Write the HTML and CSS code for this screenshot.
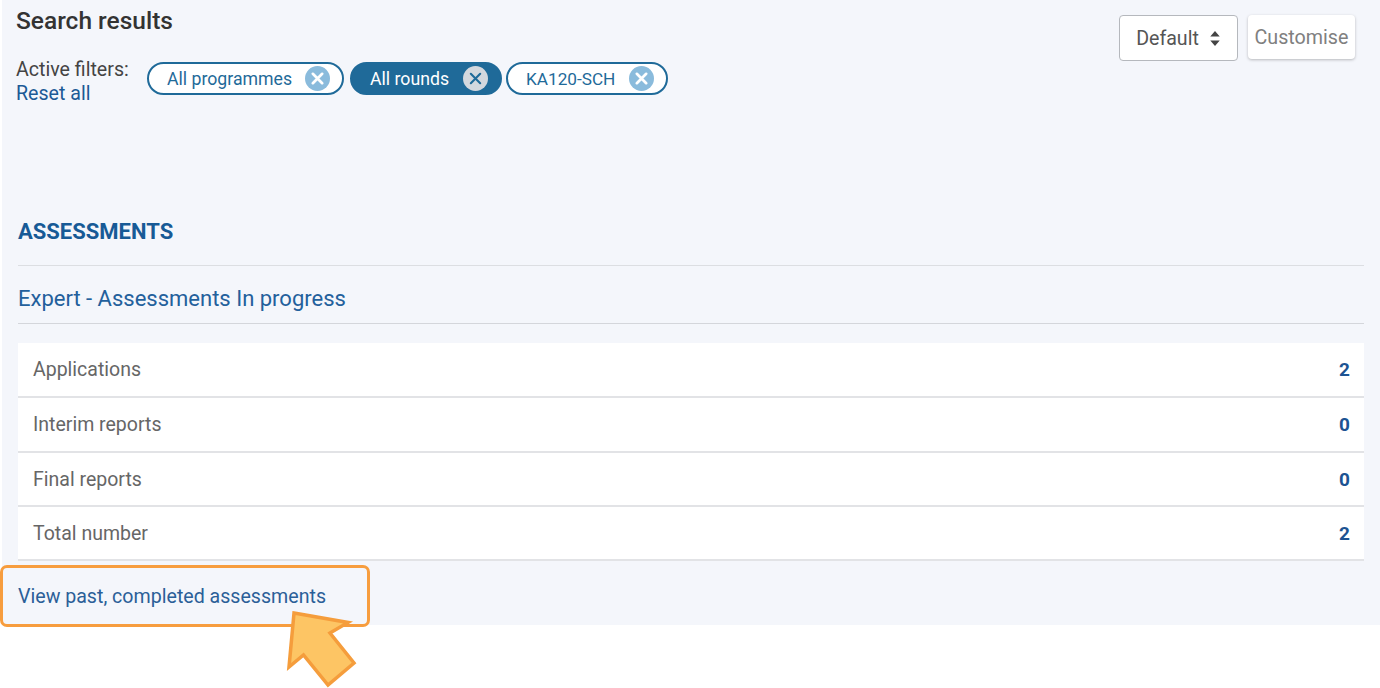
FILE: index.html
```html
<!DOCTYPE html>
<html lang="en">
<head>
<meta charset="utf-8">
<title>Search results</title>
<link rel="stylesheet" href="styles.css">
</head>
<body>
<main class="panel">
  <header class="top">
    <div class="top-left">
      <h1 class="title">Search results</h1>
      <div class="filters">
        <div class="filter-label">
          <div>Active filters:</div>
          <a class="reset">Reset all</a>
        </div>
        <div class="chips">
          <span class="chip chip-first">All programmes
            <svg class="x" viewBox="0 0 24 24"><circle cx="12" cy="12" r="12" fill="#8abbdc"/><path d="M7.5 7.5l9 9M16.500 7.500l-9 9" stroke="#fff" stroke-width="2.600" stroke-linecap="round"/></svg>
          </span>
          <span class="chip chip-active">All rounds
            <svg class="x" viewBox="0 0 24 24"><circle cx="12" cy="12" r="12" fill="#d3d8de"/><path d="M7.500 7.500l9 9M16.500 7.500l-9 9" stroke="#1f6a99" stroke-width="2" stroke-linecap="round"/></svg>
          </span>
          <span class="chip chip-last">KA120-SCH
            <svg class="x" viewBox="0 0 24 24"><circle cx="12" cy="12" r="12" fill="#8abbdc"/><path d="M7.500 7.500l9 9M16.500 7.500l-9 9" stroke="#fff" stroke-width="2.600" stroke-linecap="round"/></svg>
          </span>
        </div>
      </div>
    </div>
    <div class="actions">
      <button class="select">Default
        <svg class="updown" viewBox="0 0 12 18"><path d="M6 1l5 6H1zM6 17l-5-6h10z" fill="#444"/></svg>
      </button>
      <button class="custom">Customise</button>
    </div>
  </header>
  <h2 class="section">ASSESSMENTS</h2>
  <h3 class="subsection">Expert - Assessments In progress</h3>
  <div class="rows">
    <div class="row row-1"><span>Applications</span><b>2</b></div>
    <div class="row row-2"><span>Interim reports</span><b>0</b></div>
    <div class="row row-3"><span>Final reports</span><b>0</b></div>
    <div class="row row-4"><span>Total number</span><b>2</b></div>
  </div>
  <a class="past">View past, completed assessments</a>
</main>
<div class="highlight"></div>
<svg class="arrow" viewBox="0 0 80 80" width="80" height="80"><path d="M13 3L67 12.500L49 23L73 53L47 75L22.500 45L8 57Z" fill="#fdc564" stroke="#f59d3c" stroke-width="3.500" stroke-linejoin="miter"/></svg>
</body>
</html>
```

FILE: styles.css
```css
* { box-sizing: border-box; }
html, body { margin: 0; padding: 0; }
body {
  width: 1380px;
  height: 688px;
  overflow: hidden;
  background: #fff;
  font-family: Roboto, "Liberation Sans", sans-serif;
  position: relative;
}
.panel {
  margin-left: 2px;
  height: 625px;
  background: #f4f6fb;
  padding: 0 16px;
}
.top { display: flex; justify-content: space-between; height: 197px; }
.top-left { margin-left: -2px; }
.title {
  margin: 0;
  padding-top: 8px;
  font-size: 24.500px;
  line-height: 26px;
  font-weight: 500;
  color: #333;
}
.filters { display: flex; margin-top: 24px; }
.filter-label { font-size: 19.600px; line-height: 24px; color: #444; width: 131px; }
.reset { color: #1c5a96; display: block; }
.chips { display: flex; margin-top: 4px; }
.chip {
  display: flex;
  align-items: center;
  justify-content: space-between;
  height: 33px;
  border: 2px solid #1f6a99;
  border-radius: 17px;
  background: #fff;
  color: #1f6a99;
  font-size: 17.700px;
  padding: 0 13px 0 18px;
}
.chip-first { width: 197px; }
.chip-active { width: 152px; margin-left: 6px; background: #1f6a99; color: #fff; }
.chip-last { width: 162px; margin-left: 4px; font-size: 17.200px; }
.x { width: 25px; height: 25px; flex: none; margin-right: -1px; }
.actions { display: flex; padding-top: 15px; margin-right: 9px; }
.select {
  width: 119px;
  height: 46px;
  border: 1px solid #b5b8bd;
  border-radius: 4px;
  background: #fff;
  color: #555;
  font: 400 19.600px Roboto, sans-serif;
  display: flex;
  align-items: center;
  justify-content: center;
  gap: 10px;
}
.updown { width: 12px; height: 17px; }
.custom {
  width: 107px;
  height: 44px;
  margin-left: 10px;
  border: 0;
  border-radius: 4px;
  background: #fff;
  box-shadow: 0 1px 3px rgba(0,0,0,.25);
  color: #808080;
  font: 400 19.700px Roboto, sans-serif;
  padding: 0;
}
.section {
  margin: 0;
  height: 69px;
  padding: 21px 0 0;
  font-size: 22px;
  line-height: 28px;
  font-weight: 700;
  color: #175a96;
  border-bottom: 1.500px solid #dcdee2;
}
.subsection {
  margin: 0;
  height: 58px;
  padding: 19px 0 0;
  font-size: 22px;
  line-height: 28px;
  font-weight: 400;
  color: #23609c;
  border-bottom: 1.500px solid #d4d6db;
}
.rows { margin: 19px 0 0; background: #fff; }
.row {
  display: flex;
  justify-content: space-between;
  align-items: center;
  padding: 0 14px 0 15px;
  height: 54.500px;
  border-bottom: 2px solid #e2e3e6;
  font-size: 19.500px;
  color: #666;
}
.row-1 { height: 55px; }
.row-3 { height: 54px; padding-top: 1px; }
.row-4 { padding-top: 2px; }
.row b { color: #1c5392; font-weight: 700; font-size: 19px; }
.past {
  display: block;
  margin: 25px 0 0;
  font-size: 19.600px;
  line-height: 22px;
  color: #2b5f98;
}
.highlight {
  position: absolute;
  left: 0;
  top: 565px;
  width: 370px;
  height: 62px;
  border: 3.500px solid #f79d3e;
  border-radius: 7px;
}
.arrow { position: absolute; left: 281px; top: 610px; }
```
